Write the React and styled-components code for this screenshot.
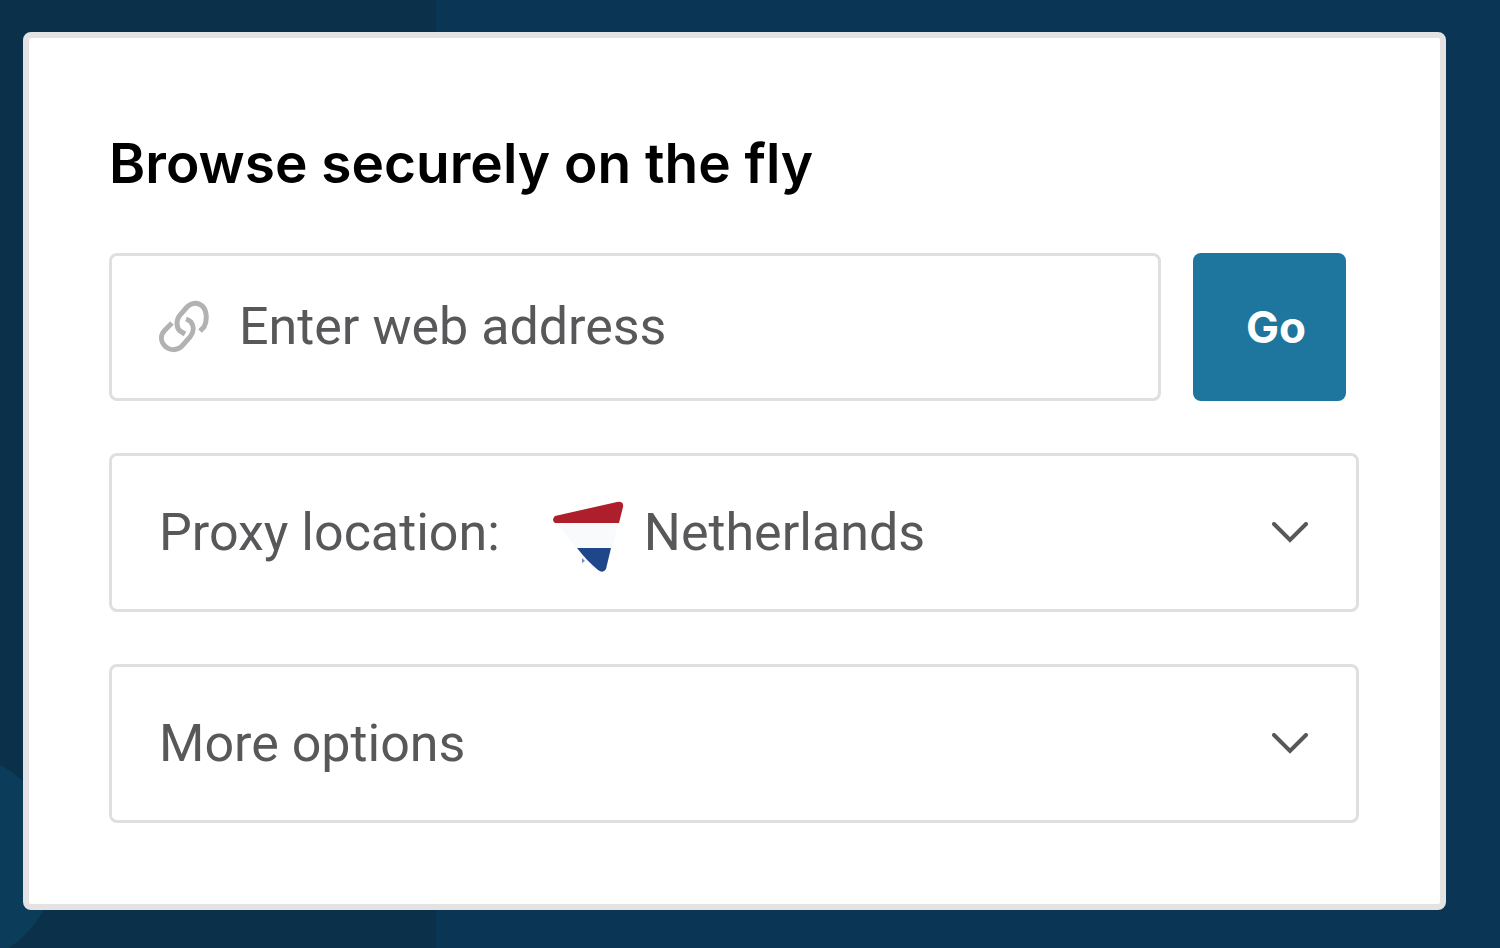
import React, { useState } from 'react';
import styled, { createGlobalStyle } from 'styled-components';

const GlobalStyle = createGlobalStyle`
  * {
    box-sizing: border-box;
  }

  body {
    margin: 0;
    background: #0b3554;
    font-family: Roboto, 'Liberation Sans', sans-serif;
  }
`;

// Styled Components
const Page = styled.main`
  min-height: 100vh;
  padding: 32px 54px 38px 23px;
  background:
    radial-gradient(circle at -50px 859px, #0b3c5a 106px, transparent 107px),
    linear-gradient(to right, #0a3149 436px, #0b3554 436px);
`;

const Card = styled.form`
  display: flex;
  flex-direction: column;
  gap: 52px;
  padding: 87px 81px 81px 80px;
  border: 6px solid #e4e2e2;
  border-radius: 8px;
  background: #fff;
`;

const Heading = styled.h1`
  margin: 0;
  font-family: Inter, 'Liberation Sans', sans-serif;
  font-size: 55px;
  line-height: 76px;
  font-weight: 600;
  color: #000;
`;

const AddressRow = styled.div`
  display: flex;
  gap: 32px;
  padding-right: 13px;
`;

const Box = styled.div`
  display: flex;
  align-items: center;
  flex: 1;
  min-width: 0;
  min-height: ${({ $height }) => $height || 159}px;
  padding: 0 48px 0 47px;
  border: 3px solid #dfdfdf;
  border-radius: 8px;
  background: #fff;
  font-size: 52px;
  line-height: 64px;
  color: #58585a;
`;

const AddressInput = styled.input`
  flex: 1;
  min-width: 0;
  margin-left: 30px;
  padding: 0;
  border: none;
  outline: none;
  background: none;
  font: inherit;
  color: inherit;

  &::placeholder {
    color: #58585a;
    opacity: 1;
  }
`;

const GoButton = styled.button`
  padding: 0 40px 0 53px;
  border: none;
  border-radius: 8px;
  background: #1e759e;
  font-family: Inter, 'Liberation Sans', sans-serif;
  font-size: 44px;
  font-weight: 700;
  color: #fff;
  cursor: pointer;
`;

const LocationSelect = styled.select`
  flex: 1;
  min-width: 0;
  margin-left: 20px;
  padding: 0;
  border: none;
  outline: none;
  appearance: none;
  background: none;
  font: inherit;
  color: inherit;
  cursor: pointer;
`;

const OptionsButton = styled(Box).attrs({ as: 'button', type: 'button' })`
  justify-content: space-between;
  font-family: inherit;
  text-align: left;
  cursor: pointer;
`;

const Icon = styled.svg`
  display: block;
  flex: none;
`;

const FlagIcon = styled(Icon)`
  margin-left: 52px;
`;

const LinkIcon = () => (
  <Icon width="50" height="54" viewBox="0 0 50 54" fill="none" stroke="#b2b2b2" strokeWidth="5" aria-hidden="true">
    <path d="M13 23L6 30C2 34 1 40 5 45C10 51 18 51 23 46L31 37C35 32 35 26 32 22Q30 20 27 19" />
    <path d="M41 31L45 27Q48 22 47 14Q46 7 41 4.500C36 2 31 4 28 7L21 15C17 20 17 27 21 31L26 34" />
  </Icon>
);

const NetherlandsFlag = () => (
  <FlagIcon width="72" height="80" viewBox="0 -8 72 80" aria-hidden="true">
    <path d="M5 22H66L60 48H25Z" fill="#f9fafb" />
    <path d="M3 15L65 1Q72 0 71 6L67 22H3Q-1 19 3 15Z" fill="#ad1f2a" />
    <path d="M25 47H59L54 68Q51 73 46 69Q35 60 25 47Z" fill="#1f468b" />
    <path d="M30 57L33 60L30 62Z" fill="#6f8bb5" />
  </FlagIcon>
);

const Chevron = () => (
  <Icon width="36" height="22" viewBox="0 0 36 22" fill="none" stroke="#58585a" strokeWidth="4" strokeLinecap="round" aria-hidden="true">
    <path d="M2 2L18 18L34 2" />
  </Icon>
);

const ProxyForm = () => {
  const [address, setAddress] = useState('');
  const [location, setLocation] = useState('nl');
  const [expanded, setExpanded] = useState(false);

  return (
    <Card onSubmit={(e) => e.preventDefault()}>
      <Heading>Browse securely on the fly</Heading>
      <AddressRow>
        <Box as="label" $height={148}>
          <LinkIcon />
          <AddressInput
            type="text"
            name="address"
            aria-label="Enter web address"
            placeholder="Enter web address"
            value={address}
            onChange={(e) => setAddress(e.target.value)}
          />
        </Box>
        <GoButton type="submit">Go</GoButton>
      </AddressRow>
      <Box>
        <label htmlFor="location">Proxy location:</label>
        <NetherlandsFlag />
        <LocationSelect id="location" value={location} onChange={(e) => setLocation(e.target.value)}>
          <option value="nl">Netherlands</option>
        </LocationSelect>
        <Chevron />
      </Box>
      <OptionsButton aria-expanded={expanded} onClick={() => setExpanded(!expanded)}>
        More options
        <Chevron />
      </OptionsButton>
    </Card>
  );
};

const App = () => (
  <>
    <GlobalStyle />
    <Page>
      <ProxyForm />
    </Page>
  </>
);

export default App;
